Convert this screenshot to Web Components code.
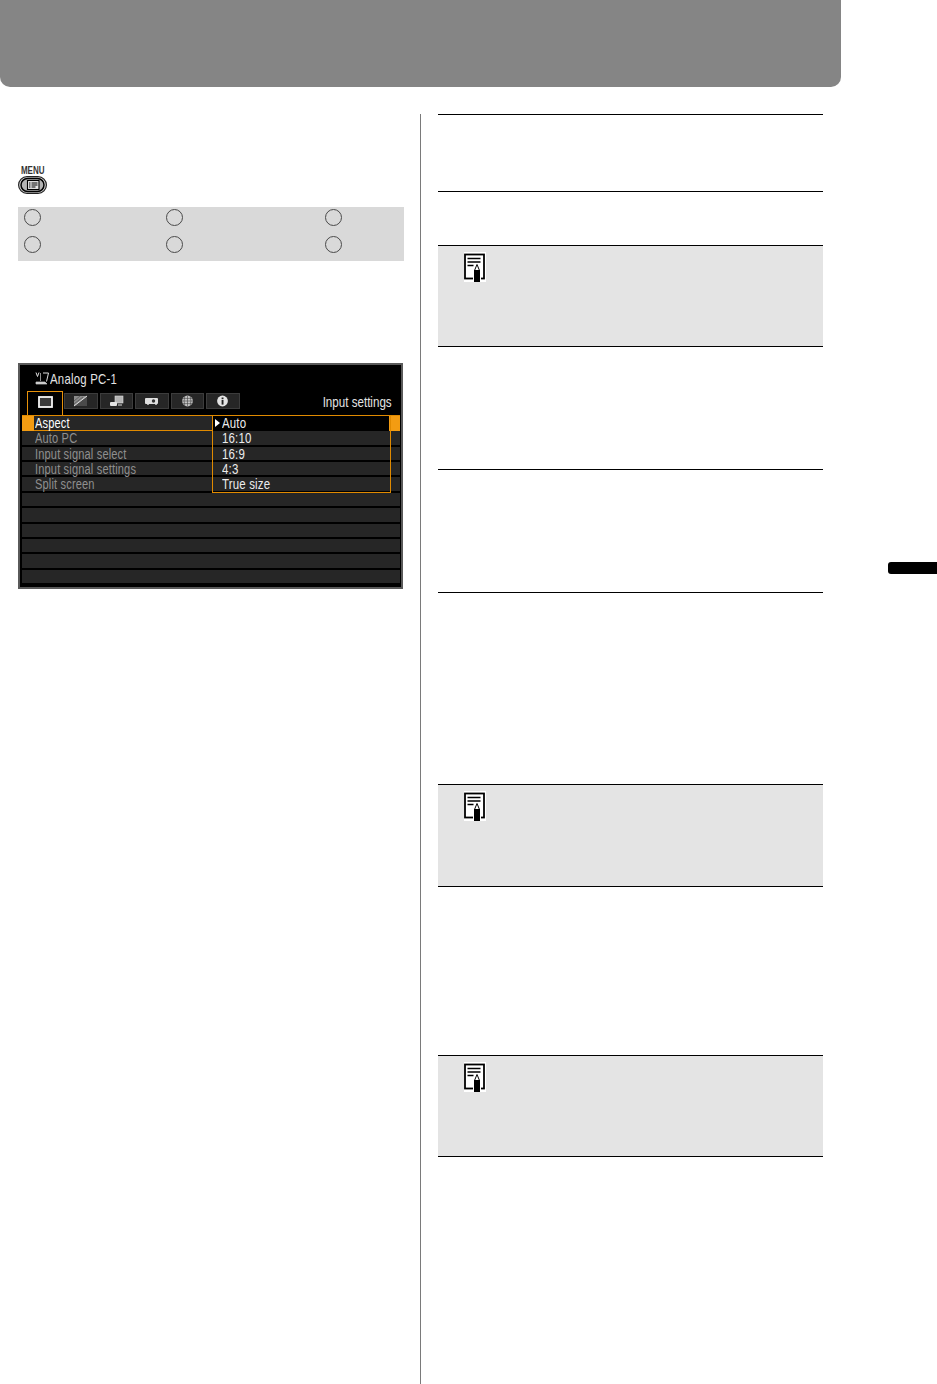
<!DOCTYPE html>
<html lang="en">
<head>
<meta charset="utf-8">
<title>Input settings</title>
<style>
  html, body { margin: 0; padding: 0; background: #fff; }
  body { font-family: "Liberation Sans", Arial, sans-serif; }
</style>
</head>
<body>

<manual-page>
  <page-column>
    <menu-key></menu-key>
    <option-grid></option-grid>
    <osd-screen source="Analog PC-1" heading="Input settings">
      <osd-row label="Aspect" value="Auto" selected></osd-row>
      <osd-row label="Auto PC" value="16:10"></osd-row>
      <osd-row label="Input signal select" value="16:9"></osd-row>
      <osd-row label="Input signal settings" value="4:3"></osd-row>
      <osd-row label="Split screen" value="True size"></osd-row>
      <osd-row></osd-row>
      <osd-row></osd-row>
      <osd-row></osd-row>
      <osd-row></osd-row>
      <osd-row></osd-row>
      <osd-row></osd-row>
    </osd-screen>
  </page-column>
  <spec-list slot="right">
    <spec-row style="--h:77px"></spec-row>
    <spec-row style="--h:54px"></spec-row>
    <spec-row note style="--h:101px"></spec-row>
    <spec-row style="--h:123px"></spec-row>
    <spec-row style="--h:123px"></spec-row>
    <spec-row style="--h:192px"></spec-row>
    <spec-row note style="--h:102px"></spec-row>
    <spec-row style="--h:169px"></spec-row>
    <spec-row note last style="--h:101px"></spec-row>
  </spec-list>
</manual-page>

<script>
class ManualPage extends HTMLElement {
  constructor() {
    super();
    this.attachShadow({ mode: "open" }).innerHTML = `
    <style>
      :host { display: grid; grid-template-columns: 888px 49px; width: 937px; height: 1384px; overflow: hidden; }
      .banner { width: 841px; height: 87px; background: #858585; border-radius: 0 0 10px 10px; }
      .columns { display: flex; padding: 27px 0 0 18px; height: 1270px; }
      .left { width: 386px; padding-top: 52px; }
      .divider { width: 1px; margin-left: 16px; background: #7a7a7a; }
      .right { width: 385px; margin-left: 17px; }
      .thumb { height: 12px; margin-top: 562px; background: #000; border-radius: 3px 0 0 3px; }
    </style>
    <div>
      <div class="banner"></div>
      <div class="columns">
        <div class="left"><slot></slot></div>
        <div class="divider"></div>
        <div class="right"><slot name="right"></slot></div>
      </div>
    </div>
    <div class="thumb"></div>`;
  }
}

class PageColumn extends HTMLElement {
  constructor() {
    super();
    this.attachShadow({ mode: "open" }).innerHTML = `
    <style>
      :host { display: flex; flex-direction: column; }
    </style>
    <slot></slot>`;
  }
}

class MenuKey extends HTMLElement {
  constructor() {
    super();
    this.attachShadow({ mode: "open" }).innerHTML = `
    <style>
      :host { display: flex; flex-direction: column; align-items: center; width: 29px; height: 28px; }
      .name { display: block; height: 10px; font: bold 10px/10px "Liberation Sans", sans-serif; color: #333; transform: scaleX(.8); }
      svg { display: block; }
    </style>
    <span class="name">MENU</span>
    <svg width="29" height="18" viewBox="0 0 29 18">
      <rect x="0.6" y="0.6" width="27.800" height="16.800" rx="8.400" fill="#dcdcdc" stroke="#222" stroke-width="1.200"/>
      <rect x="3" y="2.500" width="23" height="13" rx="6.500" fill="#b4b4b4" stroke="#000" stroke-width="1.500"/>
      <rect x="9.500" y="4.500" width="11.500" height="9" fill="#e6e6e6" stroke="#000" stroke-width="1.100"/>
      <path d="M11 7h1.500M13.500 7h6M11 9h1.500M13.500 9h6M11 11h1.500M13.500 11h4" stroke="#000" stroke-width="1"/>
    </svg>`;
  }
}

class OptionGrid extends HTMLElement {
  constructor() {
    super();
    const cell = `<i></i>`;
    this.attachShadow({ mode: "open" }).innerHTML = `
    <style>
      :host { display: grid; grid-template-columns: 142px 159px 1fr; align-content: start; row-gap: 10px; box-sizing: border-box;
        width: 386px; height: 54px; margin-top: 13px; padding: 2px 0 0 6px; background: #d9d9d9; }
      i { display: block; box-sizing: border-box; width: 17px; height: 17px; border: 1px solid #4a4a4a; border-radius: 50%; }
    </style>
    ${cell.repeat(6)}`;
  }
}

class OsdScreen extends HTMLElement {
  constructor() {
    super();
    const tabs = [
      `<rect x="1" y="1" width="13" height="10" fill="#3a3a3a" stroke="#f6f6f6" stroke-width="1.800"/>`,
      `<rect x="1" y="1" width="13" height="10" fill="#4a4a4a"/><path d="M1 1h13L1 11z" fill="#8c8c8c"/><path d="M1 11L14 1" stroke="#e0e0e0" stroke-width="1"/><path d="M1 6L7 1M1 9L10 2" stroke="#555" stroke-width=".8"/>`,
      `<rect x="6" y="1" width="8" height="7" fill="#b4b4b4" stroke="#ddd" stroke-width=".6"/><rect x="1" y="7" width="7" height="4" rx="1" fill="#e4e4e4"/><path d="M9 10h4" stroke="#aaa" stroke-width="1.400"/>`,
      `<rect x="1" y="3" width="13" height="6" rx="1" fill="#e0e0e0"/><circle cx="9.500" cy="6" r="1.700" fill="#333"/><path d="M3 9.500h2M11 9.500h2" stroke="#aaa"/>`,
      `<circle cx="7.500" cy="6" r="5.400" fill="#c4c4c4"/><path d="M2 6h11M3 3.400h9M3 8.600h9M7.500.6v10.800M4.800 1.200q-1.400 4.800 0 9.600M10.200 1.200q1.400 4.800 0 9.600" stroke="#444" stroke-width=".6" fill="none"/>`,
      `<circle cx="7.500" cy="6" r="5.400" fill="#e4e4e4"/><rect x="6.600" y="5" width="1.900" height="4.600" fill="#222"/><rect x="6.600" y="2.500" width="1.900" height="1.700" fill="#222"/>`
    ];
    this.attachShadow({ mode: "open" }).innerHTML = `
    <style>
      :host { display: block; position: relative; box-sizing: border-box; width: 385px; height: 226px; margin-top: 102px;
        background: #000; border: 2px solid #5a5a5a; font-family: "Liberation Sans", sans-serif; }
      .title { display: flex; align-items: flex-end; height: 26px; padding: 0 0 2px 15px; box-sizing: border-box; }
      .title svg { display: block; margin: 0 1px 3px 0; }
      .source { display: inline-block; font-size: 15px; line-height: 20px; color: #e4e4e4; transform: scaleX(.76); transform-origin: left; letter-spacing: .3px; white-space: nowrap; }
      .tabs { display: flex; align-items: flex-start; height: 24px; padding-left: 7px; gap: 2px; }
      .tab { display: flex; align-items: center; justify-content: center; box-sizing: border-box; width: 33.5px; height: 16px; margin-top: 2px; background: #262626; border: 1px solid #3c3c3c; }
      .tab.on { width: 36px; height: 24px; margin: 0 -1px 0 0; padding-bottom: 4px; background: #000; border: 1.5px solid #e8920a; border-bottom: 0; }
      .heading { margin-left: auto; padding: 1px 12px 0 0; font-size: 14.500px; line-height: 20px; color: #e4e4e4; transform: scaleX(.8); transform-origin: right; white-space: nowrap; }
      .rows { display: flex; flex-direction: column; padding: 0 1px 0 2px; }
      .drop { position: absolute; left: 191.500px; top: 50px; width: 179px; height: 78px; box-sizing: border-box; border: 1.5px solid #e08a00; pointer-events: none; }
    </style>
    <div class="title">
      <svg width="14" height="15" viewBox="0 0 14 15">
        <path d="M1 1.500l1.500 4 1.500-4M8 2h5.500l-2 8.500" fill="none" stroke="#ddd" stroke-width="1"/>
        <path d="M5.500 2v8M1 11h9l2 2H1z" fill="#ccc" stroke="#ccc" stroke-width=".7"/>
      </svg>
      <span class="source">${this.getAttribute("source")}</span>
    </div>
    <div class="tabs">
      ${tabs.map((t, i) => `<div class="tab${i === 0 ? " on" : ""}"><svg width="15" height="12" viewBox="0 0 15 12">${t}</svg></div>`).join("")}
      <span class="heading">${this.getAttribute("heading")}</span>
    </div>
    <div class="rows"><slot></slot></div>
    <div class="drop"></div>`;
  }
}

class OsdRow extends HTMLElement {
  constructor() {
    super();
    const on = this.hasAttribute("selected");
    const label = this.getAttribute("label") || "";
    const value = this.getAttribute("value") || "";
    this.attachShadow({ mode: "open" }).innerHTML = `
    <style>
      :host { display: flex; box-sizing: border-box; height: 15.4px; border-bottom: 2px solid #000; background: #262626; font-size: 14px; line-height: 15px; }
      :host([selected]) { height: 16.200px; border-top: 1.5px solid #e08a00; border-bottom: 0; line-height: 14px; }
      .mark { flex: none; width: 12px; height: 100%; }
      :host([selected]) .mark { background: #f39c12; }
      .name { flex: none; box-sizing: border-box; width: 178px; height: 100%; padding-left: 1px; }
      :host([selected]) .name { border-bottom: 1.5px solid #e08a00; }
      .val { position: relative; flex: none; box-sizing: border-box; width: 177px; height: 100%; padding-left: 10px; }
      :host([selected]) .val { background: #000; }
      .end { flex: 1; height: 100%; }
      :host([selected]) .end { background: #f39c12; }
      span { display: inline-block; transform-origin: left; white-space: nowrap; letter-spacing: .2px; }
      .name span { color: #8f8f8f; transform: scaleX(.79); }
      :host([selected]) .name span { color: #fff; }
      .val span { color: #ececec; transform: scaleX(.82); }
      .arrow { position: absolute; left: 3px; top: 3px; width: 0; height: 0; border-left: 5px solid #fff; border-top: 4px solid transparent; border-bottom: 4px solid transparent; }
    </style>
    <div class="mark"></div>
    <div class="name"><span>${label}</span></div>
    <div class="val">${on ? `<div class="arrow"></div>` : ""}<span>${value}</span></div>
    <div class="end"></div>`;
  }
}

class SpecList extends HTMLElement {
  constructor() {
    super();
    this.attachShadow({ mode: "open" }).innerHTML = `
    <style>
      :host { display: flex; flex-direction: column; }
    </style>
    <slot></slot>`;
  }
}

class SpecRow extends HTMLElement {
  constructor() {
    super();
    this.attachShadow({ mode: "open" }).innerHTML = `
    <style>
      :host { display: block; box-sizing: border-box; height: var(--h); border-top: 1px solid #000; }
      :host([note]) { background: #e4e4e4; padding: 6px 0 0 26px; }
      :host([last]) { height: calc(var(--h) + 1px); border-bottom: 1px solid #000; }
      svg { display: block; }
    </style>
    ${this.hasAttribute("note") ? `
    <svg width="22" height="30" viewBox="0 0 22 30">
      <rect width="22" height="30" fill="#fff"/>
      <rect x="1" y="2.500" width="19" height="24" fill="#fff" stroke="#000" stroke-width="1.800"/>
      <path d="M3.500 6.500h13M3.500 10h13M3.500 13.500h6" stroke="#000" stroke-width="1.600"/>
      <path d="M9 19l4-8 4 8v11H9z" fill="#fff"/>
      <path d="M10 18h6v12h-6z" fill="#000"/>
      <path d="M10.500 18.500l2.500-6 2.500 6" fill="none" stroke="#000" stroke-width="1"/>
    </svg>` : ""}`;
  }
}

customElements.define("manual-page", ManualPage);
customElements.define("page-column", PageColumn);
customElements.define("menu-key", MenuKey);
customElements.define("option-grid", OptionGrid);
customElements.define("osd-screen", OsdScreen);
customElements.define("osd-row", OsdRow);
customElements.define("spec-list", SpecList);
customElements.define("spec-row", SpecRow);
</script>
</body>
</html>
